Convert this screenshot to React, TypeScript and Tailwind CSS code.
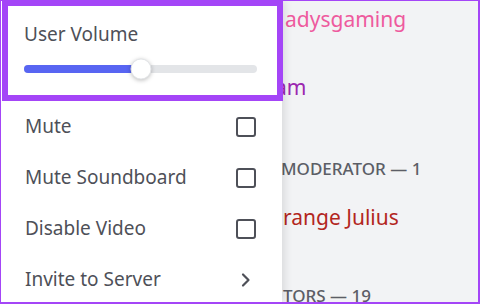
type MenuItem = {
  label: string;
  kind: "check" | "submenu";
};

const items: MenuItem[] = [
  { label: "Mute", kind: "check" },
  { label: "Mute Soundboard", kind: "check" },
  { label: "Disable Video", kind: "check" },
  { label: "Invite to Server", kind: "submenu" },
];

function Checkbox() {
  return <div className="w-[20px] h-[20px] rounded-[3px] border-2 border-[#4e5058]" />;
}

function Chevron() {
  return (
    <svg width="20" height="20" viewBox="0 0 20 20">
      <path d="M7 4.5 L12.5 10 L7 15.5" fill="none" stroke="#4e5058" strokeWidth="2.2" strokeLinecap="round" strokeLinejoin="round" />
    </svg>
  );
}

function VolumeSlider({ value }: { value: number }) {
  return (
    <div className="relative h-[8px] w-[233px] rounded-full bg-[#e3e5e8]">
      <div className="h-full rounded-full bg-[#5865f2]" style={{ width: `${value}%` }} />
      <div
        className="absolute top-1/2 w-[21px] h-[21px] -translate-x-1/2 -translate-y-1/2 rounded-full bg-white border border-[#e3e5e8] shadow-[0_1px_4px_rgba(0,0,0,0.25)]"
        style={{ left: `${value}%` }}
      />
    </div>
  );
}

function MemberList() {
  return (
    <div className="h-full w-full bg-[#f2f3f5] flex flex-col pl-[283px]" style={{ fontFamily: '"Noto Sans", sans-serif' }}>
      <div className="shrink-0 mt-[3px] h-[30px] text-[21px] leading-[30px] text-[#ee5a9e] ml-[1px]">adysgaming</div>
      <div className="shrink-0 mt-[38px] h-[30px] text-[21px] leading-[30px] text-[#9c27b0] ml-[-9px]">am</div>
      <div className="shrink-0 mt-[55px] h-[24px] text-[17px] leading-[24px] font-medium text-[#5c5e66] ml-[-3px]">MODERATOR — 1</div>
      <div className="shrink-0 mt-[21px] h-[30px] text-[21px] leading-[30px] text-[#b3261e] ml-[-1px]">range Julius</div>
      <div className="shrink-0 mt-[52px] h-[24px] text-[17px] leading-[24px] font-medium text-[#5c5e66] ml-[-1px]">TORS — 19</div>
    </div>
  );
}

export default function App() {
  return (
    <div className="relative w-[480px] h-[304px] overflow-hidden border-l border-t border-r-2 border-b-2 border-[#a445f7]">
      <MemberList />
      <div
        className="absolute left-0 top-0 w-[281px] h-full bg-white shadow-[3px_0_8px_rgba(0,0,0,0.10)] flex flex-col"
        style={{ fontFamily: '"Noto Sans", sans-serif' }}
      >
        <div className="shrink-0 ml-[1px] mt-[-1px] w-[281px] h-[101px] border-[6px] border-[#a445f7] pl-[16px] pt-[16px]">
          <div className="text-[19px] leading-[24px] text-[#4e5058]">User Volume</div>
          <div className="mt-[19px]">
            <VolumeSlider value={50} />
          </div>
        </div>
        <div className="shrink-0 flex flex-col">
          {items.map((item) => (
            <div key={item.label} className="shrink-0 h-[51px] flex items-center justify-between pl-[24px] pr-[26px]">
              <span className="text-[19px] text-[#4e5058]">{item.label}</span>
              {item.kind === "check" ? <Checkbox /> : <Chevron />}
            </div>
          ))}
        </div>
      </div>
    </div>
  );
}
